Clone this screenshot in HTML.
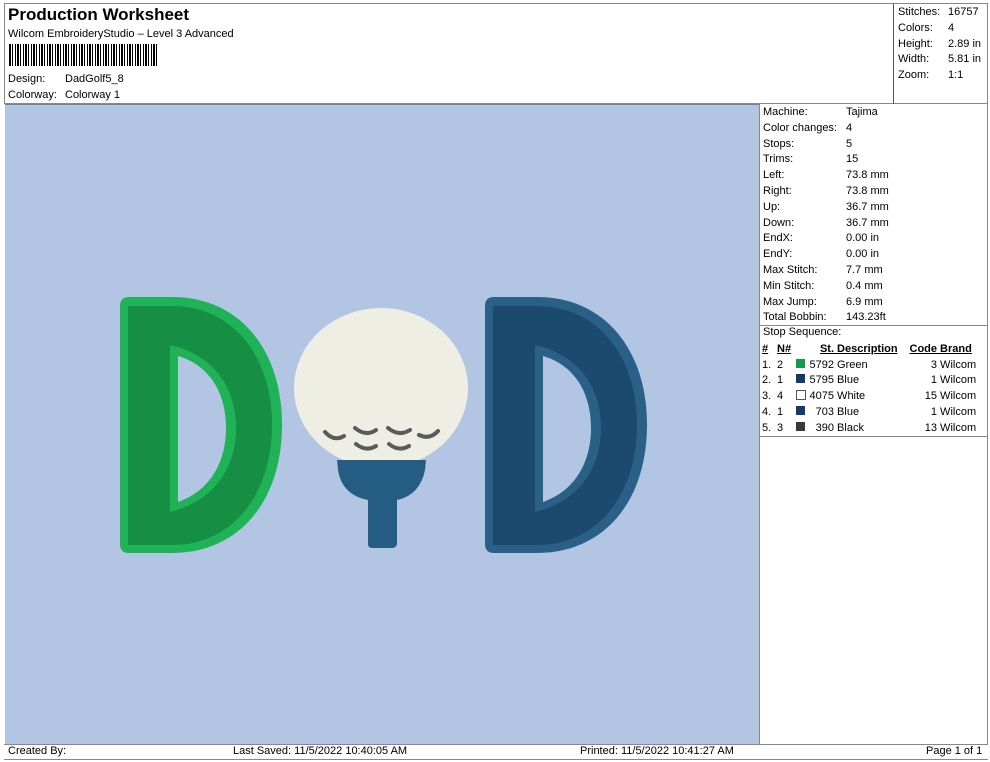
<!DOCTYPE html><html><head><style>
body{margin:0;width:990px;height:762px;background:#fff;font-family:"Liberation Sans",sans-serif;font-size:11px;color:#000;position:relative;overflow:hidden}
.a{position:absolute}
td{padding:0;height:15.8px;font-size:11px;white-space:nowrap;overflow:hidden}
</style></head><body>
<div class="a" style="left:4px;top:3px;width:984px;height:101px;border:1px solid #888;box-sizing:border-box"></div>
<div class="a" style="left:893px;top:3px;width:95px;height:101px;border-left:1px solid #555"></div>
<div class="a" style="left:8px;top:5px;font-size:17px;font-weight:bold">Production Worksheet</div>
<div class="a" style="left:8px;top:28px">Wilcom EmbroideryStudio – Level 3 Advanced</div>
<div class="a" style="left:9px;top:44px;width:149px;height:22px;background:repeating-linear-gradient(90deg,#000 0 2px,#fff 2px 3px,#000 3px 4px,#fff 4px 6px,#000 6px 7px,#fff 7px 8px)"></div>
<div class="a" style="left:8px;top:73px">Design:</div><div class="a" style="left:65px;top:73px">DadGolf5_8</div>
<div class="a" style="left:8px;top:89px">Colorway:</div><div class="a" style="left:65px;top:89px">Colorway 1</div>
<div class="a" style="left:898px;top:5px;line-height:15.8px">Stitches:<br>Colors:<br>Height:<br>Width:<br>Zoom:</div>
<div class="a" style="left:948px;top:5px;line-height:15.8px">16757<br>4<br>2.89 in<br>5.81 in<br>1:1</div>
<div class="a" style="left:5px;top:104px;width:754px;height:640px;background:#b2c6e3;border-top:1px solid #6f7f99;box-sizing:border-box"></div>
<div class="a" style="left:759px;top:104px;width:229px;height:640px;border-left:1px solid #888;border-right:1px solid #888;box-sizing:border-box"></div>
<div class="a" style="left:763px;top:105px;line-height:15.8px">Machine:<br>Color changes:<br>Stops:<br>Trims:<br>Left:<br>Right:<br>Up:<br>Down:<br>EndX:<br>EndY:<br>Max Stitch:<br>Min Stitch:<br>Max Jump:<br>Total Bobbin:</div>
<div class="a" style="left:846px;top:105px;line-height:15.8px">Tajima<br>4<br>5<br>15<br>73.8 mm<br>73.8 mm<br>36.7 mm<br>36.7 mm<br>0.00 in<br>0.00 in<br>7.7 mm<br>0.4 mm<br>6.9 mm<br>143.23ft</div>
<div class="a" style="left:759px;top:325px;width:229px;border-top:1px solid #888"></div>
<div class="a" style="left:763px;top:326px">Stop Sequence:</div>
<table class="a" style="left:762px;top:341px;border-collapse:collapse;table-layout:fixed;width:221px">
<colgroup><col style="width:15px"><col style="width:19px"><col style="width:10px"><col style="width:28px"><col style="width:64px"><col style="width:39px"><col style="width:46px"></colgroup>
<tr style="font-weight:bold;text-decoration:underline"><td>#</td><td>N#</td><td></td><td style="text-align:right">St.</td><td>&nbsp;Description</td><td style="text-align:right">Code</td><td>&nbsp;Brand</td></tr>
<tr><td>1.</td><td>2</td><td><span style="display:inline-block;width:9px;height:9px;background:#149a4a"></span></td><td style="text-align:right">5792</td><td>&nbsp;Green</td><td style="text-align:right">3</td><td>&nbsp;Wilcom</td></tr>
<tr><td>2.</td><td>1</td><td><span style="display:inline-block;width:9px;height:9px;background:#133a6b"></span></td><td style="text-align:right">5795</td><td>&nbsp;Blue</td><td style="text-align:right">1</td><td>&nbsp;Wilcom</td></tr>
<tr><td>3.</td><td>4</td><td><span style="display:inline-block;width:8px;height:8px;border:1px solid #555;background:#fff"></span></td><td style="text-align:right">4075</td><td>&nbsp;White</td><td style="text-align:right">15</td><td>&nbsp;Wilcom</td></tr>
<tr><td>4.</td><td>1</td><td><span style="display:inline-block;width:9px;height:9px;background:#133a6b"></span></td><td style="text-align:right">703</td><td>&nbsp;Blue</td><td style="text-align:right">1</td><td>&nbsp;Wilcom</td></tr>
<tr><td>5.</td><td>3</td><td><span style="display:inline-block;width:9px;height:9px;background:#3a3a3a"></span></td><td style="text-align:right">390</td><td>&nbsp;Black</td><td style="text-align:right">13</td><td>&nbsp;Wilcom</td></tr>
</table>
<div class="a" style="left:759px;top:436px;width:229px;border-top:1px solid #888"></div>
<svg class="a" style="left:0;top:0" width="990" height="762">
<path d="M120,306 Q120,297 129,297 L172,297 C240,297 282,350 282,425 C282,500 240,553 172,553 L129,553 Q120,553 120,544 Z M178,356 C212,366 226,396 226,428 C226,460 212,490 178,502 Z" fill="#1fb256" fill-rule="evenodd"/>
<path d="M128,306 L172,306 C232,306 272,355 272,425 C272,495 232,545 172,545 L128,545 Z M170,345 C218,356 236,392 236,428 C236,464 218,500 170,512 Z" fill="#168f45" fill-rule="evenodd"/>
<path d="M485,306 Q485,297 494,297 L537,297 C605,297 647,350 647,425 C647,500 605,553 537,553 L494,553 Q485,553 485,544 Z M543,356 C577,366 591,396 591,428 C591,460 577,490 543,502 Z" fill="#2a6088" fill-rule="evenodd"/>
<path d="M493,306 L537,306 C597,306 637,355 637,425 C637,495 597,545 537,545 L493,545 Z M535,345 C583,356 601,392 601,428 C601,464 583,500 535,512 Z" fill="#1c4a6e" fill-rule="evenodd"/>
<ellipse cx="381" cy="388" rx="87" ry="80" fill="#eeeee4"/>
<path d="M337,460 L426,460 L425,470 Q420,495 397,500 L397,544 Q396,548 392,548 L372,548 Q368,548 368,544 L368,500 Q342,495 338,470 Z" fill="#245c84"/>
<g fill="none" stroke="#585d58" stroke-width="4" stroke-linecap="round">
<path d="M325,432 Q334,442 344,436"/><path d="M355,428 Q366,437 376,430"/><path d="M388,428 Q399,437 410,430"/><path d="M419,435 Q430,440 438,431"/>
<path d="M356,444 Q366,452 376,446"/><path d="M389,444 Q399,452 409,446"/>
</g>
</svg>
<div class="a" style="left:4px;top:744px;width:984px;height:16px;border-top:1px solid #888;border-bottom:1px solid #888;box-sizing:border-box"></div>
<div class="a" style="left:8px;top:745px">Created By:</div>
<div class="a" style="left:233px;top:745px">Last Saved: 11/5/2022 10:40:05 AM</div>
<div class="a" style="left:580px;top:745px">Printed: 11/5/2022 10:41:27 AM</div>
<div class="a" style="left:926px;top:745px">Page 1 of 1</div>
</body></html>
